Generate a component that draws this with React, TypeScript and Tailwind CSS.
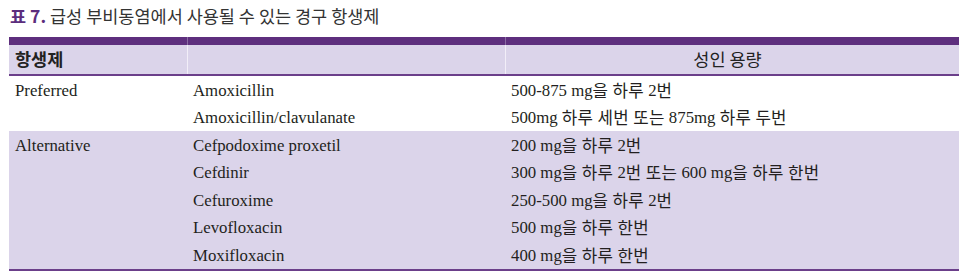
import React from "react";

const rows1 = [
  ["Preferred", "Amoxicillin", "500-875 mg을 하루 2번"],
  ["", "Amoxicillin/clavulanate", "500mg 하루 세번 또는 875mg 하루 두번"],
];
const rows2 = [
  ["Alternative", "Cefpodoxime proxetil", "200 mg을 하루 2번"],
  ["", "Cefdinir", "300 mg을 하루 2번 또는 600 mg을 하루 한번"],
  ["", "Cefuroxime", "250-500 mg을 하루 2번"],
  ["", "Levofloxacin", "500 mg을 하루 한번"],
  ["", "Moxifloxacin", "400 mg을 하루 한번"],
];

const serif = { fontFamily: '"Liberation Serif", serif' };
const kr = { fontFamily: '"Noto Sans CJK KR", "Noto Sans", sans-serif' };

function Mixed({ text }: { text: string }) {
  const parts = text.split(/([\uAC00-\uD7A3]+)/).filter((p) => p.length > 0);
  return (
    <>
      {parts.map((p, i) =>
        /[\uAC00-\uD7A3]/.test(p) ? (
          <span key={i} style={kr} className="text-[16.8px] tracking-[0.3px]">
            {p}
          </span>
        ) : (
          <span key={i} style={serif}>
            {p.replace(/ /g, "\u00a0")}
          </span>
        )
      )}
    </>
  );
}

function Row({ r }: { r: string[] }) {
  return (
    <div className="grid grid-cols-[178px_318px_1fr] h-[27.5px] items-center text-[16.8px] text-[#231f20]" style={serif}>
      <div className="pl-[6px] pt-[1px]">{r[0]}</div>
      <div className="pl-[6px] pt-[1px] h-full flex items-center">{r[1]}</div>
      <div className="pl-[6px] pt-[1px] h-full flex items-center whitespace-pre">
        <Mixed text={r[2]} />
      </div>
    </div>
  );
}

export default function App() {
  return (
    <div className="w-[967px] h-[277px] bg-white">
      <div className="h-[37px] pl-[10px] pt-[5px] text-[17.5px] leading-[21px] text-[#333333]" style={kr}>
        <span className="font-bold text-[#5b2d7d]">표 7.</span> 급성 부비동염에서 사용될 수 있는 경구 항생제
      </div>
      <div className="ml-[9px] w-[950px]">
        <div className="grid grid-cols-[178px_318px_1fr] h-[8px] bg-[#5e2f7e]">
          <div />
          <div className="border-l border-[#8a6aa3]" />
          <div className="border-l border-[#8a6aa3]" />
        </div>
        <div
          className="grid grid-cols-[178px_318px_1fr] h-[31px] bg-[#dbd4ea] border-b-2 border-[#6b3f8a] text-[17.5px] text-[#222]"
          style={kr}
        >
          <div className="pl-[6px] font-bold flex items-center">항생제</div>
          <div className="border-l border-[#f2eef8]" />
          <div className="border-l border-[#f2eef8] flex items-center justify-center pr-[10px]">성인 용량</div>
        </div>
        <div className="bg-white">
          {rows1.map((r, i) => (
            <Row key={i} r={r} />
          ))}
        </div>
        <div className="bg-[#dbd4ea] border-b-2 border-[#6b3f8a]">
          {rows2.map((r, i) => (
            <Row key={i} r={r} />
          ))}
        </div>
      </div>
    </div>
  );
}
